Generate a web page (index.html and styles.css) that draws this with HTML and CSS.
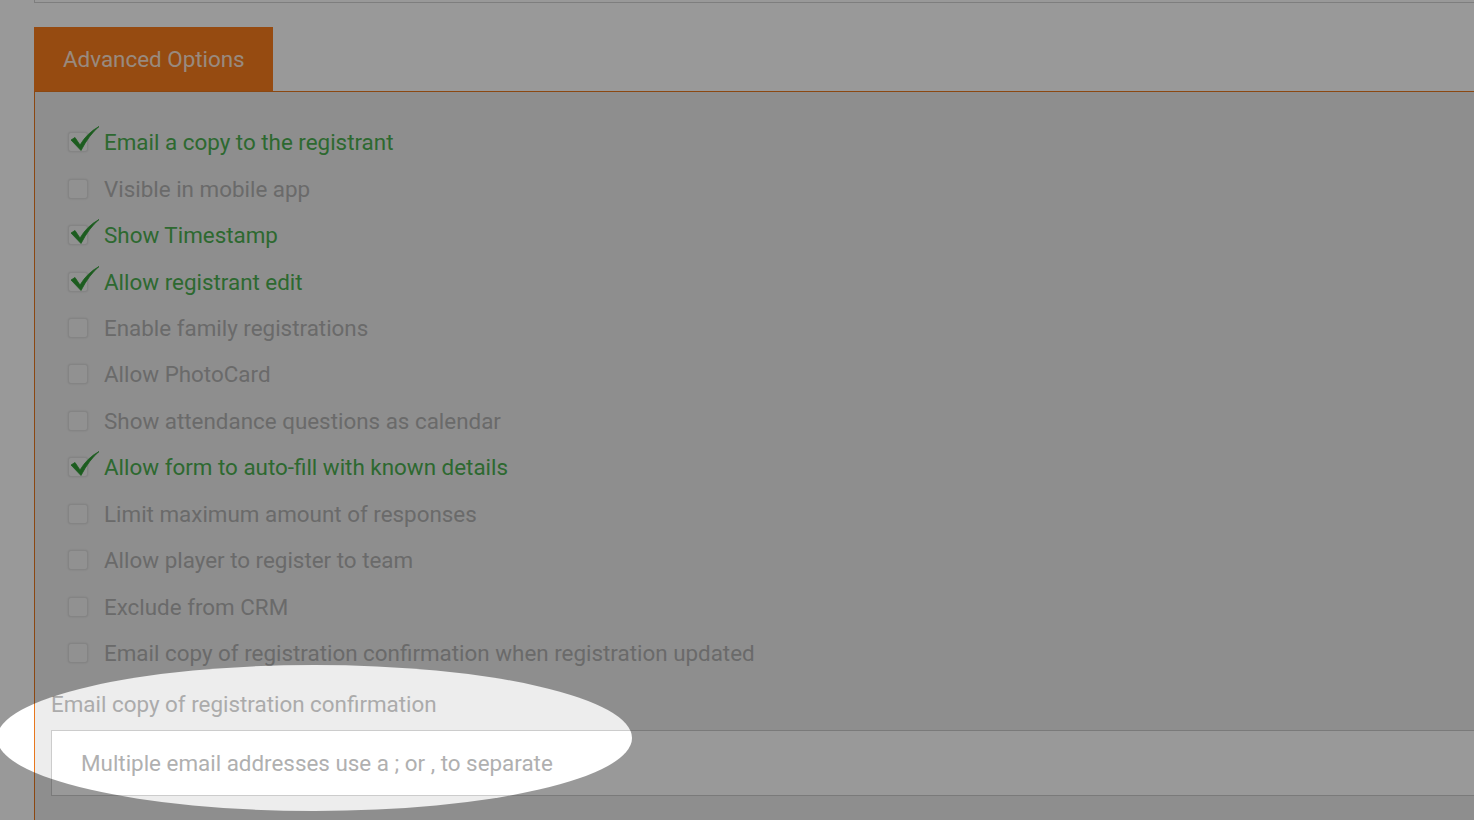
FILE: index.html
```html
<!DOCTYPE html>
<html lang="en">
<head>
    <meta charset="UTF-8">
    <title>Form Settings</title>
    <link rel="stylesheet" href="styles.css">
</head>
<body>
    <div class="page">
        <div class="prev-box"></div>

        <div class="tab">Advanced Options</div>
        <div class="panel">
            <div class="options">
                <label class="option checked"><span class="box"><svg viewBox="0 0 30 26"><path d="M1 14 L5 11.5 L10 19 Q17 7 29 0.5 Q19 9 11 24.5 Z"/></svg></span>Email a copy to the registrant</label>
                <label class="option"><span class="box"></span>Visible in mobile app</label>
                <label class="option checked"><span class="box"><svg viewBox="0 0 30 26"><path d="M1 14 L5 11.5 L10 19 Q17 7 29 0.5 Q19 9 11 24.5 Z"/></svg></span>Show Timestamp</label>
                <label class="option checked"><span class="box"><svg viewBox="0 0 30 26"><path d="M1 14 L5 11.5 L10 19 Q17 7 29 0.5 Q19 9 11 24.5 Z"/></svg></span>Allow registrant edit</label>
                <label class="option"><span class="box"></span>Enable family registrations</label>
                <label class="option"><span class="box"></span>Allow PhotoCard</label>
                <label class="option"><span class="box"></span>Show attendance questions as calendar</label>
                <label class="option checked"><span class="box"><svg viewBox="0 0 30 26"><path d="M1 14 L5 11.5 L10 19 Q17 7 29 0.5 Q19 9 11 24.5 Z"/></svg></span>Allow form to auto-fill with known details</label>
                <label class="option"><span class="box"></span>Limit maximum amount of responses</label>
                <label class="option"><span class="box"></span>Allow player to register to team</label>
                <label class="option"><span class="box"></span>Exclude from CRM</label>
                <label class="option"><span class="box"></span>Email copy of registration confirmation when registration updated</label>
            </div>

            <div class="field">
                <div class="field-label">Email copy of registration confirmation</div>
                <input class="field-input" type="text" placeholder="Multiple email addresses use a ; or , to separate">
            </div>
        </div>
    </div>

    <!-- spotlight highlight over the email field -->
    <div class="spotlight"></div>
</body>
</html>
```

FILE: styles.css
```css
* {
    margin: 0;
    padding: 0;
    box-sizing: border-box;
}

html, body {
    height: 100%;
    overflow: hidden;
}

body {
    font-family: 'Roboto', 'Liberation Sans', sans-serif;
    background: #ffffff;
    position: relative;
}

.page {
    width: 1520px;
    padding-left: 34px;
}

.prev-box {
    height: 3px;
    border: 1px solid #d2d2d2;
    border-top: none;
    margin-bottom: 24px;
}

.tab {
    display: inline-flex;
    align-items: center;
    width: 239px;
    height: 64px;
    padding-left: 29px;
    background: #fb7e1d;
    color: rgba(255, 255, 255, 0.82);
    font-size: 22.4px;
    vertical-align: bottom;
}

.panel {
    background: #ededed;
    border-top: 1px solid #e8781e;
    border-left: 1px solid #e8781e;
    padding: 27px 0 30px 16px;
    height: 760px;
}

.options {
    padding-left: 17px;
}

.option {
    display: flex;
    align-items: center;
    height: 46.45px;
    font-size: 22.4px;
    color: #b1b1b1;
    cursor: pointer;
}

.option.checked {
    color: #4caf50;
}

.box {
    position: relative;
    width: 20px;
    height: 20px;
    margin-right: 16px;
    border: 1px solid #dcdcdc;
    border-radius: 3px;
    background: #f2f2f2;
    box-shadow: 0 0 2px rgba(0, 0, 0, 0.12);
    flex-shrink: 0;
}

.box svg {
    position: absolute;
    left: 1px;
    top: -7px;
    width: 30px;
    height: 26px;
    fill: #2f9a34;
    stroke: #2f9a34;
    stroke-width: 0.8;
    stroke-linejoin: round;
}

.field {
    margin-top: 15px;
}

.field-label {
    font-size: 22.4px;
    color: #ababab;
    line-height: 26px;
    margin-bottom: 13px;
}

.field-input {
    display: block;
    width: 100%;
    height: 66px;
    border: 1px solid #cccccc;
    background: #ffffff;
    padding-left: 29px;
    font-family: inherit;
    font-size: 22.4px;
    color: #555;
    outline: none;
}

.field-input::placeholder {
    color: #b0b0b0;
}

.spotlight {
    position: absolute;
    left: -3px;
    top: 665px;
    width: 635px;
    height: 146px;
    border-radius: 50%;
    box-shadow: 0 0 0 3000px rgba(0, 0, 0, 0.4);
    pointer-events: none;
}
```
